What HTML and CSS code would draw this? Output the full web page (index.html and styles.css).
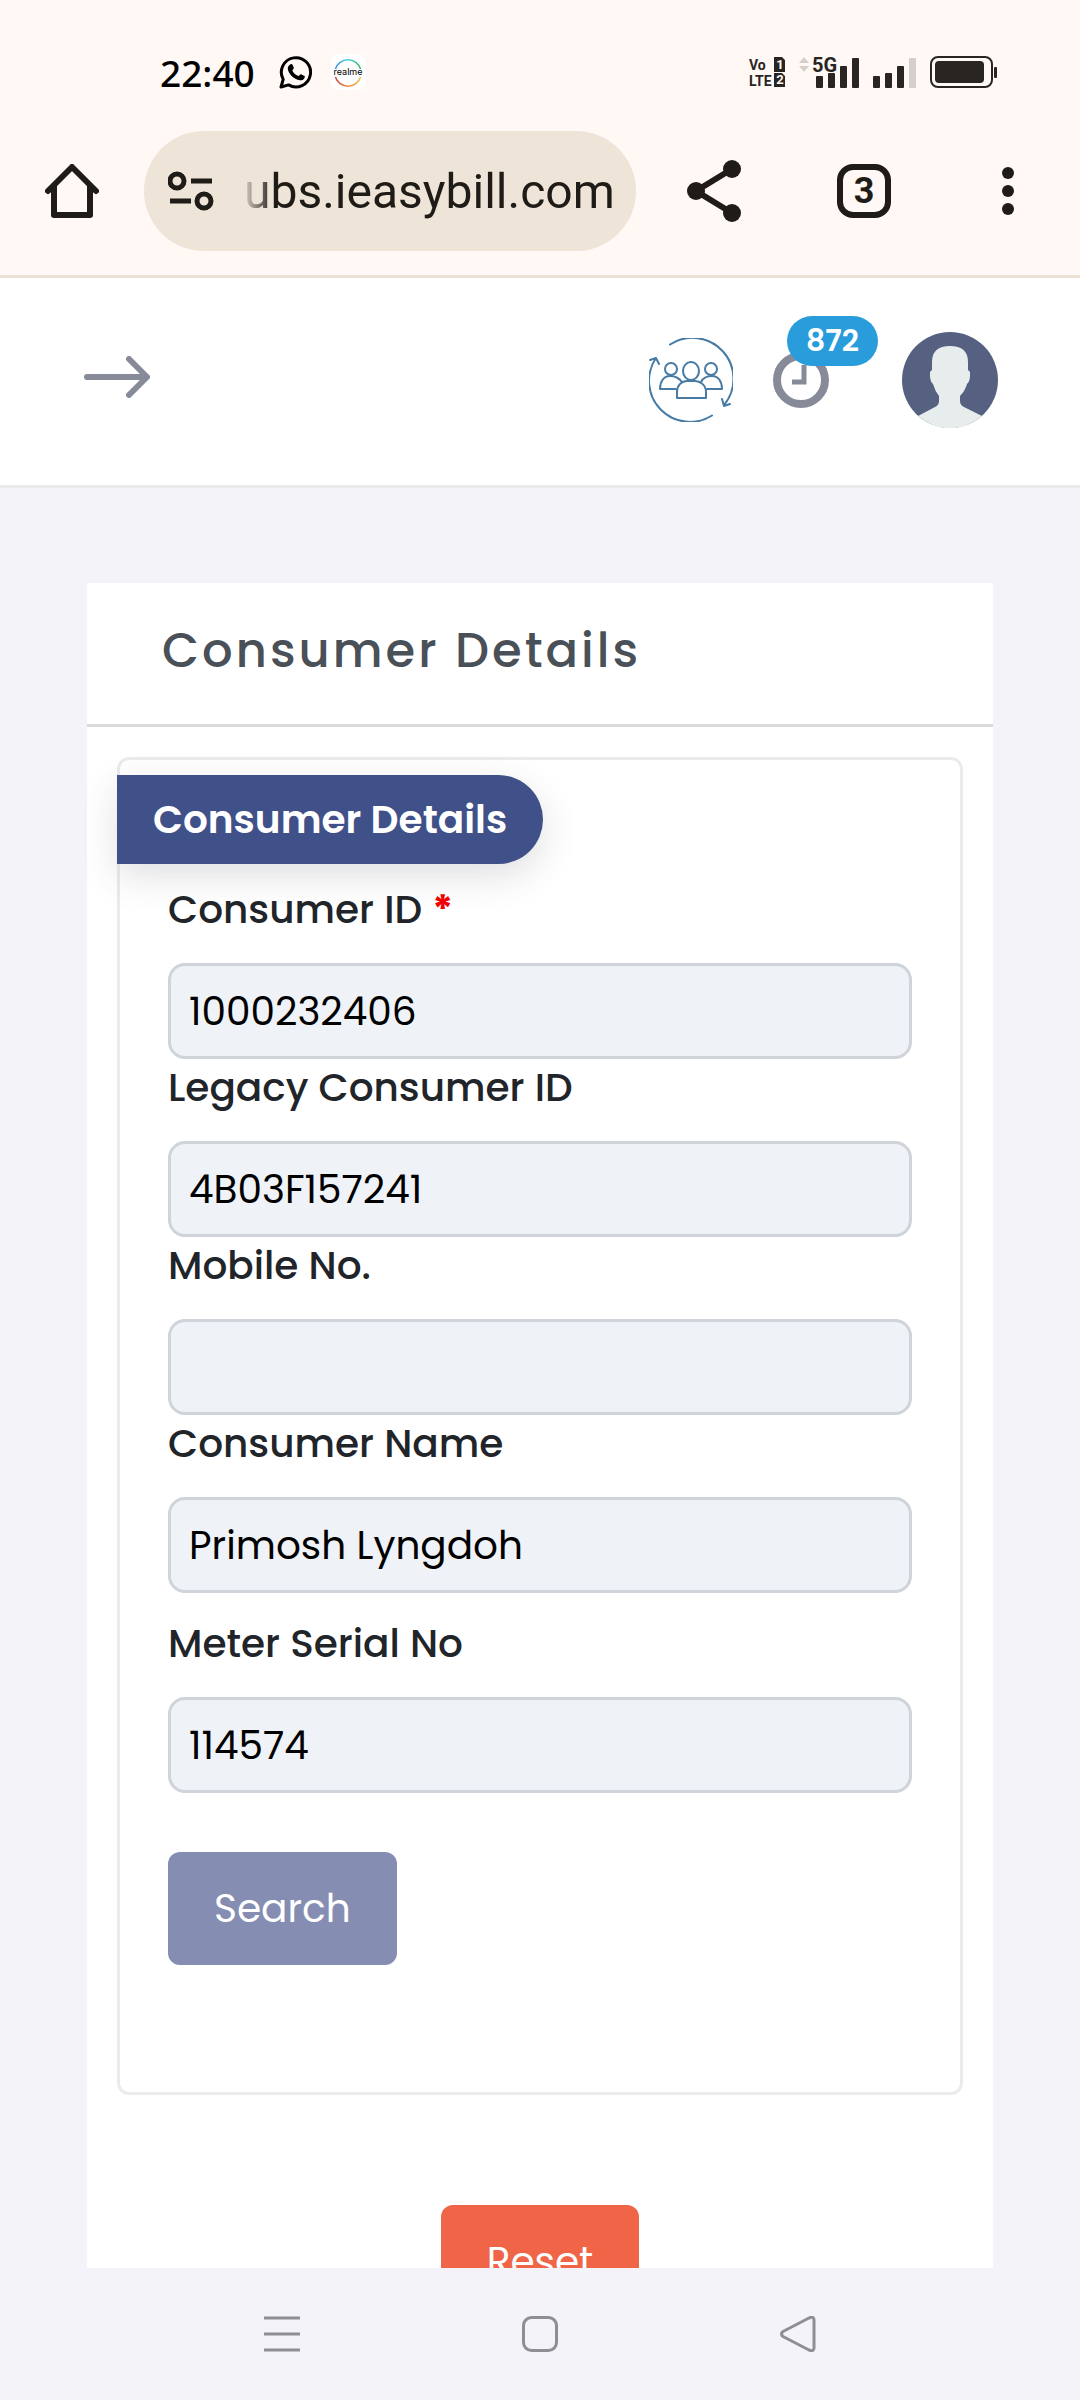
FILE: index.html
```html
<!DOCTYPE html>
<html lang="en">
<head>
    <meta charset="UTF-8">
    <meta name="viewport" content="width=device-width, initial-scale=1.0">
    <title>Consumer Details</title>
    <link rel="stylesheet" href="styles.css">
</head>
<body>
    <div class="status-bar">
        <span class="status-time">22:40</span>
        <svg class="icon-whatsapp" width="33" height="34" viewBox="0 0 33 34">
            <path d="M2 32 L4.2 24.4 A14.6 14.6 0 1 1 9.6 29.9 Z" fill="none" stroke="#000" stroke-width="3" stroke-linejoin="round"/>
            <path d="M11.6 9.3c.8-.5 1.6-.3 2 .6l1.1 2.7c.3.8-.2 1.5-.9 2.2-.5.5-.5.9-.1 1.5 1.3 2.1 2.9 3.5 5.2 4.5.6.3 1 .2 1.4-.3.9-1.2 1.4-1.5 2.2-1.1l2.6 1.3c.8.4.8 1 .5 2-.6 1.9-2.7 2.9-4.7 2.6C14.7 24.3 9.3 18.9 8.8 13.8c-.1-2 .9-3.5 2.8-4.5z" fill="#000"/>
        </svg>
        <svg class="icon-realme" width="36" height="36" viewBox="0 0 36 36">
            <defs>
                <linearGradient id="ring-top" x1="0" x2="1">
                    <stop offset="0" stop-color="#3d8fe0"/>
                    <stop offset=".5" stop-color="#3fd0dc"/>
                    <stop offset="1" stop-color="#37b86a"/>
                </linearGradient>
                <linearGradient id="ring-bottom" x1="0" x2="1">
                    <stop offset="0" stop-color="#c8443c"/>
                    <stop offset=".5" stop-color="#f08a3c"/>
                    <stop offset="1" stop-color="#e8c04a"/>
                </linearGradient>
            </defs>
            <rect width="36" height="36" rx="9" fill="#fff"/>
            <path d="M5.4 15 A13.2 13.2 0 0 1 30.6 15" fill="none" stroke="url(#ring-top)" stroke-width="1.5"/>
            <path d="M5.4 23 A13.2 13.2 0 0 0 30.6 23" fill="none" stroke="url(#ring-bottom)" stroke-width="1.5"/>
            <text x="18" y="21" class="realme-text">realme</text>
        </svg>
        <div class="status-right">
            <svg width="37" height="32" viewBox="0 0 37 32">
                <text x="0" y="14" class="volte-text">Vo</text>
                <text x="0" y="30" class="volte-text">LTE</text>
                <path d="M25 1h8l3 3v12H25zM25 17h8l3 3v11H25z" fill="#282523"/>
                <text x="31" y="13" class="sim-text">1</text>
                <text x="31" y="28" class="sim-text">2</text>
            </svg>
            <svg width="118" height="34" viewBox="0 0 118 34">
                <path d="M0 8l5-6 5 6zM0 11h10l-5 6z" fill="#d5cfcb"/>
                <text x="13" y="17" class="network-text">5G</text>
                <g fill="#282523">
                    <rect x="17" y="21" width="7" height="12" rx="1"/>
                    <rect x="29" y="18" width="7" height="15" rx="1"/>
                    <rect x="41" y="11" width="7" height="22" rx="1"/>
                    <rect x="53" y="3" width="7" height="30" rx="1"/>
                    <rect x="74" y="21" width="7" height="12" rx="1"/>
                    <rect x="86" y="18" width="7" height="15" rx="1"/>
                    <rect x="98" y="11" width="7" height="22" rx="1"/>
                </g>
                <rect x="110" y="3" width="7" height="30" rx="1" fill="#d5cfcb"/>
            </svg>
            <svg width="67" height="32" viewBox="0 0 67 32">
                <rect x="1" y="1" width="61" height="30" rx="7" fill="none" stroke="#282523" stroke-width="2"/>
                <rect x="5" y="5" width="49" height="22" rx="4" fill="#282523"/>
                <rect x="64" y="11" width="3" height="11" rx="1" fill="#282523"/>
            </svg>
        </div>
    </div>

    <div class="browser-bar">
        <button class="icon-btn" type="button" aria-label="Home">
            <svg width="54" height="54" viewBox="0 0 54 54" fill="none" stroke="#1f1b16" stroke-width="6" stroke-linejoin="round" stroke-linecap="round">
                <path d="M3 27 L27 3 L51 27"/>
                <path d="M9 22 V51 H45 V22"/>
            </svg>
        </button>
        <a class="address" href="#">
            <svg width="46" height="40" viewBox="0 0 46 40" fill="none" stroke="#1f1b16" stroke-width="5">
                <circle cx="9" cy="10" r="7"/>
                <path d="M23 10H44M2 30H23"/>
                <circle cx="36" cy="30" r="7"/>
            </svg>
            <span class="address-text">ubs.ieasybill.com</span>
        </a>
        <button class="icon-btn share" type="button" aria-label="Share">
            <svg width="54" height="62" viewBox="0 0 54 62" fill="#1f1b16">
                <path d="M45 9 L9 31 L45 53" fill="none" stroke="#1f1b16" stroke-width="6"/>
                <circle cx="45" cy="9" r="9"/>
                <circle cx="9" cy="31" r="9"/>
                <circle cx="45" cy="53" r="9"/>
            </svg>
        </button>
        <button class="tab-count" type="button">3</button>
        <button class="icon-btn" type="button" aria-label="More">
            <svg width="12" height="50" viewBox="0 0 12 50" fill="#1f1b16">
                <circle cx="6" cy="7" r="6"/>
                <circle cx="6" cy="25" r="6"/>
                <circle cx="6" cy="43" r="6"/>
            </svg>
        </button>
    </div>

    <header class="topbar">
        <button class="icon-btn menu-toggle" type="button" aria-label="Toggle menu">
            <svg width="66" height="42" viewBox="0 0 66 42" fill="none" stroke="#878a99" stroke-width="6" stroke-linecap="round" stroke-linejoin="round">
                <path d="M3 21H62M45 3L63 21L45 39"/>
            </svg>
        </button>
        <div class="topbar-right">
            <button class="icon-btn" type="button" aria-label="Switch consumer">
                <svg width="84" height="84" viewBox="0 0 84 84" fill="none" stroke="#477ba4" stroke-width="2" stroke-linecap="round" stroke-linejoin="round">
                    <path d="M21 6.5 A41 41 0 0 1 75 67 M73 61 L75 68 L81 66"/>
                    <path d="M63 77.5 A41 41 0 0 1 7 20 M1 22 L7 20 L10 26"/>
                    <ellipse cx="42" cy="33" rx="8" ry="9"/>
                    <path d="M28 60 V54 C28 47 33 43 38 43 H46 C51 43 57 47 57 54 V60 H28Z"/>
                    <circle cx="22" cy="31" r="6"/>
                    <circle cx="62" cy="31" r="6"/>
                    <path d="M27 51 H11 C11 43 15 38 21 38 C26 38 30 40 33 44"/>
                    <path d="M58 51 H73 C73 43 69 38 63 38 C58 38 54 40 52 44"/>
                </svg>
            </button>
            <button class="icon-btn notifications" type="button" aria-label="Pending items">
                <svg width="58" height="58" viewBox="0 0 58 58" fill="none" stroke="#878a99">
                    <circle cx="28" cy="29" r="24" stroke-width="8"/>
                    <path d="M31 14V31H19" stroke-width="5"/>
                </svg>
                <span class="badge">872</span>
            </button>
            <button class="icon-btn" type="button" aria-label="Account">
                <svg width="96" height="96" viewBox="0 0 96 96">
                    <circle cx="48" cy="48" r="48" fill="#566080"/>
                    <path d="M16 84 L33 75 Q37 73 37 69 V64 Q33 59 31 52 Q28 49 28 44 V40 L30 38 V30 Q30 14 48 14 Q66 14 66 30 V38 L68 40 V44 Q68 49 65 52 Q63 59 58 64 V69 Q58 73 62 75 L80 84 A48 48 0 0 1 16 84Z" fill="#e7ecec"/>
                </svg>
            </button>
        </div>
    </header>

    <main class="page">
        <div class="card">
            <div class="card-header">
                <h1 class="card-title">Consumer Details</h1>
            </div>
            <form class="card-body">
                <section class="panel">
                    <h2 class="ribbon">Consumer Details</h2>
                    <div class="fields">
                        <div class="field">
                            <label for="consumer-id">Consumer ID <span class="required">*</span></label>
                            <input type="text" id="consumer-id" value="1000232406">
                        </div>
                        <div class="field">
                            <label for="legacy-id">Legacy Consumer ID</label>
                            <input type="text" id="legacy-id" value="4B03F157241">
                        </div>
                        <div class="field">
                            <label for="mobile">Mobile No.</label>
                            <input type="text" id="mobile" value="">
                        </div>
                        <div class="field">
                            <label for="consumer-name">Consumer Name</label>
                            <input type="text" id="consumer-name" value="Primosh Lyngdoh">
                        </div>
                        <div class="field field-spaced">
                            <label for="meter-no">Meter Serial No</label>
                            <input type="text" id="meter-no" value="114574">
                        </div>
                        <button class="btn btn-search" type="button">Search</button>
                    </div>
                </section>
                <button class="btn btn-reset" type="reset">Reset</button>
            </form>
        </div>
    </main>

    <nav class="system-nav">
        <button class="icon-btn" type="button" aria-label="Recent apps">
            <svg width="36" height="36" viewBox="0 0 36 36" stroke="#8f8e92" stroke-width="3">
                <path d="M0 2H36M0 18H36M0 34H36"/>
            </svg>
        </button>
        <button class="icon-btn" type="button" aria-label="Home screen">
            <svg width="36" height="36" viewBox="0 0 36 36" fill="none" stroke="#8f8e92" stroke-width="3">
                <rect x="1.5" y="1.5" width="33" height="33" rx="8"/>
            </svg>
        </button>
        <button class="icon-btn" type="button" aria-label="Back">
            <svg width="36" height="36" viewBox="0 0 36 36" fill="none" stroke="#8f8e92" stroke-width="3" stroke-linejoin="round">
                <path d="M3 15.5 L29 2 Q34 0 34 4 V32 Q34 36 29 34 L3 20.5 Q0 18 3 15.5Z"/>
            </svg>
        </button>
    </nav>
</body>
</html>
```

FILE: styles.css
```css
* {
    margin: 0;
    padding: 0;
    box-sizing: border-box;
}

body {
    display: flex;
    flex-direction: column;
    height: 100vh;
    font-family: Poppins, Inter, sans-serif;
    font-size: 39px;
    background-color: #f3f3f9;
    color: #212529;
}

svg {
    display: block;
    flex-shrink: 0;
}

button {
    font-family: inherit;
    border: none;
    cursor: pointer;
}

.icon-btn {
    background: none;
}

/* phone status bar */
.status-bar {
    display: flex;
    align-items: center;
    flex-shrink: 0;
    height: 131px;
    padding: 13px 83px 0 160px;
    background-color: #fff8f5;
}

.status-time {
    font-family: "Noto Sans", sans-serif;
    font-size: 37px;
    font-weight: 500;
    color: #000;
}

.icon-whatsapp {
    margin-left: 24px;
}

.icon-realme {
    margin-left: 18px;
}

.realme-text {
    font-family: Inter, sans-serif;
    font-size: 9px;
    text-anchor: middle;
}

.status-right {
    display: flex;
    align-items: center;
    gap: 13px;
    margin-left: auto;
}

.volte-text,
.sim-text,
.network-text {
    font-family: Roboto, sans-serif;
    font-weight: 700;
    fill: #282523;
}

.volte-text {
    font-size: 14px;
}

.sim-text {
    font-size: 13px;
    fill: #fff8f5;
    text-anchor: middle;
}

.network-text {
    font-size: 20px;
}

/* browser toolbar */
.browser-bar {
    display: flex;
    align-items: center;
    flex-shrink: 0;
    height: 147px;
    padding: 0 66px 24px 45px;
    border-bottom: 3px solid #ece1d5;
    background-color: #fff8f5;
}

.address {
    display: flex;
    flex: 1;
    align-items: center;
    gap: 30px;
    height: 120px;
    margin-left: 45px;
    padding: 0 24px;
    border-radius: 60px;
    background-color: #efe4d8;
    color: #1f1b16;
    text-decoration: none;
    overflow: hidden;
}

.address-text {
    font-family: Roboto, sans-serif;
    font-size: 48px;
    color: transparent;
    background: linear-gradient(to right, #d9cec3, #1f1b16 30px);
    -webkit-background-clip: text;
    background-clip: text;
}

.share {
    margin-left: 51px;
}

.tab-count {
    width: 54px;
    height: 54px;
    margin: 0 111px 0 96px;
    border: 6px solid #1f1b16;
    border-radius: 16px;
    background: none;
    color: #1f1b16;
    font-family: Roboto, sans-serif;
    font-size: 36px;
    font-weight: 700;
    line-height: 42px;
}

/* app header */
.topbar {
    display: flex;
    align-items: center;
    justify-content: space-between;
    flex-shrink: 0;
    height: 210px;
    padding: 0 82px 3px 84px;
    border-bottom: 3px solid #e9ebec;
    background-color: #fff;
}

.menu-toggle {
    padding-bottom: 6px;
}

.topbar-right {
    display: flex;
    align-items: center;
}

.notifications {
    position: relative;
    margin: 0 71px 0 40px;
}

.badge {
    position: absolute;
    left: 14px;
    bottom: 43px;
    padding: 0 19px;
    border-radius: 25px;
    background-color: #299cdb;
    color: #fff;
    font-size: 30px;
    font-weight: 600;
    line-height: 50px;
}

/* consumer card */
.page {
    flex: 1;
    min-height: 0;
    padding: 95px 87px 0;
    overflow: hidden;
}

.card {
    background-color: #fff;
}

.card-header {
    padding: 32px 75px 37px;
    border-bottom: 3px solid #dadada;
}

.card-title {
    font-size: 48px;
    font-weight: 500;
    line-height: 72px;
    letter-spacing: 3px;
    color: #495057;
}

.card-body {
    display: flex;
    flex-direction: column;
    align-items: center;
    padding: 30px 30px 60px;
}

.panel {
    width: 100%;
    padding: 15px 0 127px;
    border: 3px solid #e9ebec;
    border-radius: 12px;
}

.ribbon {
    width: fit-content;
    margin-left: -3px;
    padding: 0 36px;
    border-radius: 0 45px 45px 0;
    background-color: #405189;
    box-shadow: 0 12px 36px rgba(56, 65, 74, 0.16);
    color: #fff;
    font-size: 39px;
    font-weight: 600;
    line-height: 89px;
}

.fields {
    padding: 17px 48px 0;
}

.field label {
    display: block;
    padding-bottom: 24px;
    font-weight: 500;
    line-height: 58px;
}

.field-spaced {
    margin-top: 22px;
}

.field input {
    display: block;
    width: 100%;
    height: 96px;
    padding: 0 18px;
    border: 3px solid #ced4da;
    border-radius: 17px;
    background-color: #eff2f7;
    color: #000;
    font-family: inherit;
    font-size: 39px;
}

.required {
    color: #f00000;
    font-weight: 700;
}

.btn {
    height: 113px;
    padding: 0 46px;
    border-radius: 12px;
    color: #fff;
    font-size: 39px;
}

.btn-search {
    margin-top: 59px;
    background-color: #858eb2;
}

.btn-reset {
    margin-top: 110px;
    background-color: #f06548;
}

/* phone navigation */
.system-nav {
    display: flex;
    align-items: center;
    justify-content: space-between;
    flex-shrink: 0;
    height: 132px;
    padding: 0 264px;
    background-color: #f3f3f9;
}
```
